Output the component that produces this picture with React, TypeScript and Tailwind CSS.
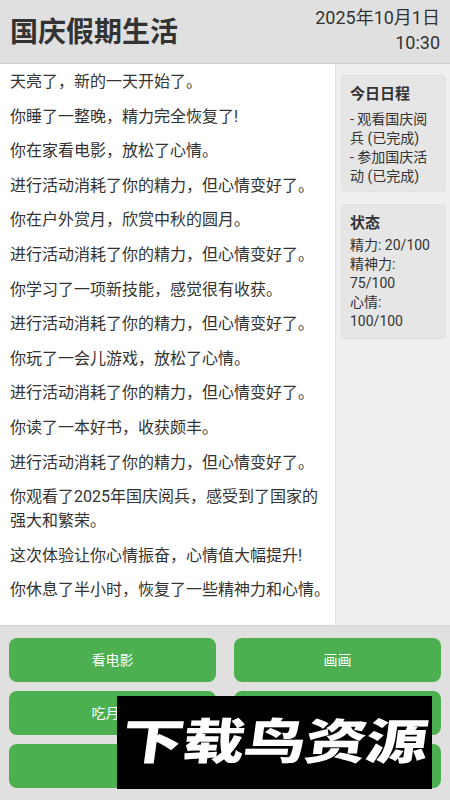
import React from 'react';

const logs = [
  '天亮了，新的一天开始了。',
  '你睡了一整晚，精力完全恢复了!',
  '你在家看电影，放松了心情。',
  '进行活动消耗了你的精力，但心情变好了。',
  '你在户外赏月，欣赏中秋的圆月。',
  '进行活动消耗了你的精力，但心情变好了。',
  '你学习了一项新技能，感觉很有收获。',
  '进行活动消耗了你的精力，但心情变好了。',
  '你玩了一会儿游戏，放松了心情。',
  '进行活动消耗了你的精力，但心情变好了。',
  '你读了一本好书，收获颇丰。',
  '进行活动消耗了你的精力，但心情变好了。',
  '你观看了2025年国庆阅兵，感受到了国家的强大和繁荣。',
  '这次体验让你心情振奋，心情值大幅提升!',
  '你休息了半小时，恢复了一些精神力和心情。',
];

const actions = ['看电影', '画画', '吃月饼', '赏月'];

export default function App() {
  return (
    <div
      className="relative flex h-[800px] w-[450px] flex-col overflow-hidden bg-white text-[#333]"
      style={{ fontFamily: 'Roboto, "Noto Sans CJK SC", sans-serif' }}
    >
      {/* Header */}
      <header className="flex h-[64px] shrink-0 items-center justify-between border-b border-[#cfcfcf] bg-[#e0e0e0] px-[10px]">
        <h1 className="mt-[2px] text-[28px] font-bold leading-none text-[#333]">国庆假期生活</h1>
        <div className="-mt-[4px] text-right text-[18px] leading-[25px] text-[#333]">
          <div>2025年10月1日</div>
          <div>10:30</div>
        </div>
      </header>

      {/* Main */}
      <div className="flex min-h-0 flex-1">
        <div className="flex-1 overflow-hidden bg-white pl-[10px] pr-[2px] pt-[6px]">
          {logs.map((line, i) => (
            <p key={i} className="mb-[10.6px] text-[16px] leading-[24px]">
              {line}
            </p>
          ))}
        </div>

        <aside className="flex w-[115px] shrink-0 flex-col gap-[12px] border-l border-[#e2e2e2] bg-[#efefef] pl-[5px] pr-[4px] pt-[11px]">
          <div className="rounded-[4px] border border-[#e0e0e0] bg-[#e6e6e6] px-2 pb-[5px] pt-2">
            <h3 className="mb-[6px] text-[15px] font-bold leading-[20px]">今日日程</h3>
            <div className="text-[14px] leading-[19px]">
              <div>- 观看国庆阅兵 (已完成)</div>
              <div>- 参加国庆活动 (已完成)</div>
            </div>
          </div>
          <div className="rounded-[4px] border border-[#e0e0e0] bg-[#e6e6e6] px-2 pb-[7px] pt-2">
            <h3 className="mb-[3px] text-[15px] font-bold leading-[20px]">状态</h3>
            <div className="text-[14px] leading-[19px]">
              <div>精力: 20/100</div>
              <div>精神力: 75/100</div>
              <div>心情: 100/100</div>
            </div>
          </div>
        </aside>
      </div>

      {/* Actions */}
      <footer className="grid h-[175px] shrink-0 grid-cols-2 content-start gap-x-[18px] gap-y-[9px] border-t border-[#d4d4d4] bg-[#e0e0e0] px-[9px] pt-[12px]">
        {actions.map((a) => (
          <button
            key={a}
            className="flex h-[44px] items-center justify-center rounded-[8px] bg-[#4caf50] text-[14px] text-white"
          >
            {a}
          </button>
        ))}
        <button className="col-span-2 flex h-[44px] items-center justify-center rounded-[8px] bg-[#4caf50] text-[14px] text-white">
          休息
        </button>
      </footer>

      {/* Watermark */}
      <div className="absolute left-[117px] top-[696px] flex h-[93px] w-[315px] items-center justify-center bg-black">
        <span className="-skew-x-6 scale-y-[0.78] text-[62px] font-black leading-none tracking-[-1px] text-white">
          下载鸟资源
        </span>
      </div>
    </div>
  );
}
